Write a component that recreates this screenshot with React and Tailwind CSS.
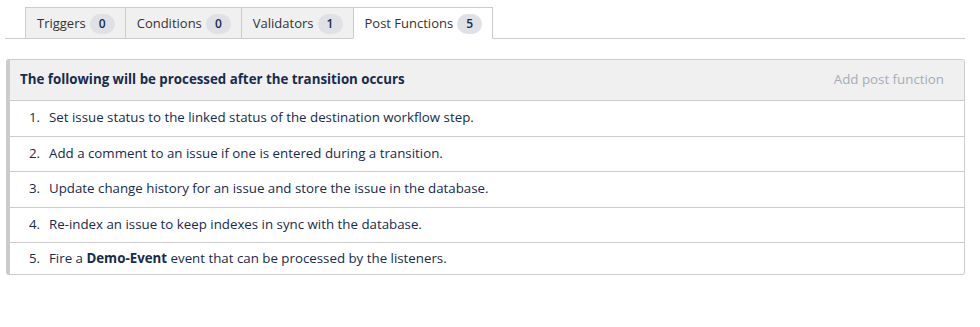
import React from "react";

const tabs = [
  { label: "Triggers", count: 0 },
  { label: "Conditions", count: 0 },
  { label: "Validators", count: 1 },
  { label: "Post Functions", count: 5, active: true },
];

const rows = [
  <>Set issue status to the linked status of the destination workflow step.</>,
  <>Add a comment to an issue if one is entered during a transition.</>,
  <>Update change history for an issue and store the issue in the database.</>,
  <>Re-index an issue to keep indexes in sync with the database.</>,
  <>Fire a <b className="font-bold text-[#172b4d]">Demo-Event</b> event that can be processed by the listeners.</>,
];

export default function App() {
  return (
    <div className="w-[980px] h-[327px] bg-white text-[13.3px] text-[#172b4d]" style={{ fontFamily: '"Open Sans", "Noto Sans", sans-serif' }}>
      <div className="pt-[7px] pl-[5px] pr-[15px]">
        <div className="flex pl-[20px] border-b border-[#cccccc] h-[32px]">
          {tabs.map((t) => (
            <div
              key={t.label}
              className={
                "flex items-center gap-[4px] pl-[11px] pr-[10px] pt-[2px] border border-[#cccccc] -ml-px first:ml-0 " +
                (t.active ? "bg-white border-b-white h-[32px]" : "bg-[#f0f0f0] border-b-0 h-[31px]")
              }
            >
              <span className="text-[#333333] text-[13px]">{t.label}</span>
              <span className="inline-flex items-center justify-center w-[25px] h-[20px] rounded-full bg-[#dfe1e6] text-[12px] font-semibold text-[#172b4d]">
                {t.count}
              </span>
            </div>
          ))}
        </div>
      </div>

      <div className="ml-[6px] mr-[15px] mt-[20px] border border-[#cccccc] border-l-[4px] rounded-[3px]">
        <div className="flex items-center justify-between h-[41px] bg-[#f0f0f0] pl-[10px] pr-[20px] border-b border-[#cccccc]">
          <span className="font-bold text-[#172b4d]">The following will be processed after the transition occurs</span>
          <span className="text-[#a5adba]">Add post function</span>
        </div>
        {rows.map((r, i) => (
          <div
            key={i}
            className={
              "flex items-center pl-[19px] text-[#172b4d] " +
              (i < rows.length - 1 ? "h-[35.5px] border-b border-[#cccccc]" : "h-[31px]")
            }
          >
            <span className="w-[20px] shrink-0">{i + 1}.</span>
            <span>{r}</span>
          </div>
        ))}
      </div>
    </div>
  );
}
